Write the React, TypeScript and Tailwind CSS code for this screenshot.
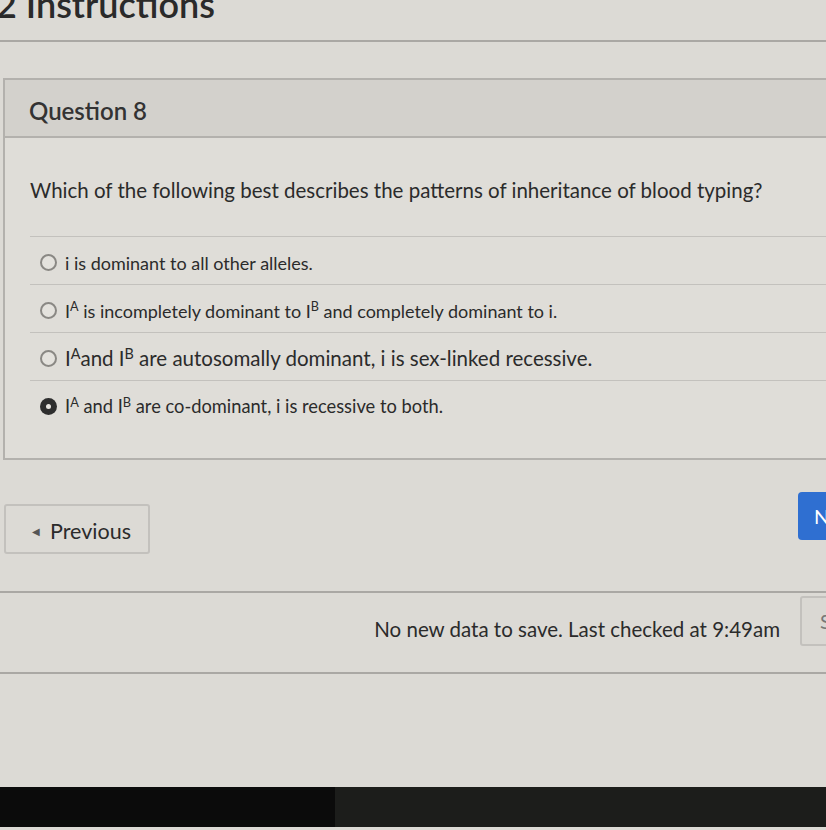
import * as React from 'react';

const answers = [
  { id: 1, size: 'text-[18px]', body: <>i is dominant to all other alleles.</> },
  {
    id: 2,
    size: 'text-[18px]',
    body: (
      <>
        I<sup className="text-[0.7em]">A</sup> is incompletely dominant to I<sup className="text-[0.7em]">B</sup> and completely dominant to i.
      </>
    ),
  },
  {
    id: 3,
    size: 'text-[20.5px]',
    body: (
      <>
        I<sup className="text-[0.7em]">A</sup>and I<sup className="text-[0.7em]">B</sup> are autosomally dominant, i is sex-linked recessive.
      </>
    ),
  },
  {
    id: 4,
    size: 'text-[18.3px]',
    body: (
      <>
        I<sup className="text-[0.7em]">A</sup> and I<sup className="text-[0.7em]">B</sup> are co-dominant, i is recessive to both.
      </>
    ),
  },
];

function Radio({ checked }: { checked: boolean }) {
  if (checked) {
    return (
      <span className="flex h-[17px] w-[17px] shrink-0 items-center justify-center rounded-full bg-[#2e2e2e]">
        <span className="h-[5px] w-[5px] rounded-full bg-[#e8e6e1]" />
      </span>
    );
  }
  return <span className="h-[17px] w-[17px] shrink-0 rounded-full border-[2.5px] border-[#8a8884] bg-[#e4e2dd]" />;
}

export default function App() {
  const [selected, setSelected] = React.useState(4);

  return (
    <div
      className="relative h-[830px] w-[826px] overflow-hidden bg-[#dcdad5] text-[#2b2b2b]"
      style={{ fontFamily: 'Lato, "Open Sans", sans-serif' }}
    >
      <h2 className="-ml-[4px] -mt-[14px] text-[36px] leading-[36px] font-semibold text-[#2a2a2a]">2 Instructions</h2>

      <div className="mt-[18px] border-t-2 border-[#aaa8a4]" />

      {/* question card */}
      <div className="ml-[3px] mt-[36px] w-[840px] border-2 border-r-0 border-[#b3b1ad] bg-[#dfddd8]">
        <div className="flex h-[58px] items-center border-b-2 border-[#b3b1ad] bg-[#d3d1cc] pl-[24px]">
          <span className="pt-[5px] text-[24px] font-semibold text-[#333]">Question 8</span>
        </div>

        <div className="pl-[25px] pt-[40px] pb-[30px]">
          <p className="text-[20.5px] leading-[24px] text-[#2b2b2b]">
            Which of the following best describes the patterns of inheritance of blood typing?
          </p>

          <div className="mt-[34px]">
            {answers.map((a) => (
              <label
                key={a.id}
                onClick={() => setSelected(a.id)}
                className="flex h-[48px] cursor-pointer items-center gap-[8px] border-t border-[#c3c1bd] pl-[10px] pt-[4px]"
              >
                <Radio checked={selected === a.id} />
                <span className={`${a.size} leading-none text-[#2b2b2b]`}>{a.body}</span>
              </label>
            ))}
          </div>
        </div>
      </div>

      {/* nav buttons */}
      <div className="mt-[32px] flex items-start justify-between">
        <button className="ml-[4px] mt-[12px] flex h-[50px] w-[146px] items-center gap-[10px] rounded-[3px] border-2 border-[#c3c1bd] bg-[#dcdad5] pl-[26px] pt-[4px] text-[21.5px] text-[#2b2b2b]">
          <span className="text-[10px] text-[#555]">◀</span>
          Previous
        </button>
        <button className="mr-[-40px] flex h-[48px] w-[68px] items-center rounded-[4px] bg-[#2f6fd1] pl-[16px] text-[20px] text-white">
          N
        </button>
      </div>

      <div className="mt-[37px] border-t-2 border-[#aaa8a4]" />

      <div className="flex items-center justify-end pt-[3px]">
        <span className="mr-[20px] pt-[16px] text-[20.5px] text-[#2b2b2b]">No new data to save. Last checked at 9:49am</span>
        <button className="mr-[-40px] h-[50px] w-[66px] rounded-[3px] border-2 border-[#c3c1bd] bg-[#dad8d3] pl-[18px] text-left text-[20px] text-[#777]">
          S
        </button>
      </div>

      <div className="mt-[26px] border-t-2 border-[#aaa8a4]" />

      <div className="mt-[113px] flex h-[40px]">
        <div className="w-[335px] bg-[#0b0b0b]" />
        <div className="flex-1 bg-[#1c1d1b]" />
      </div>
    </div>
  );
}
